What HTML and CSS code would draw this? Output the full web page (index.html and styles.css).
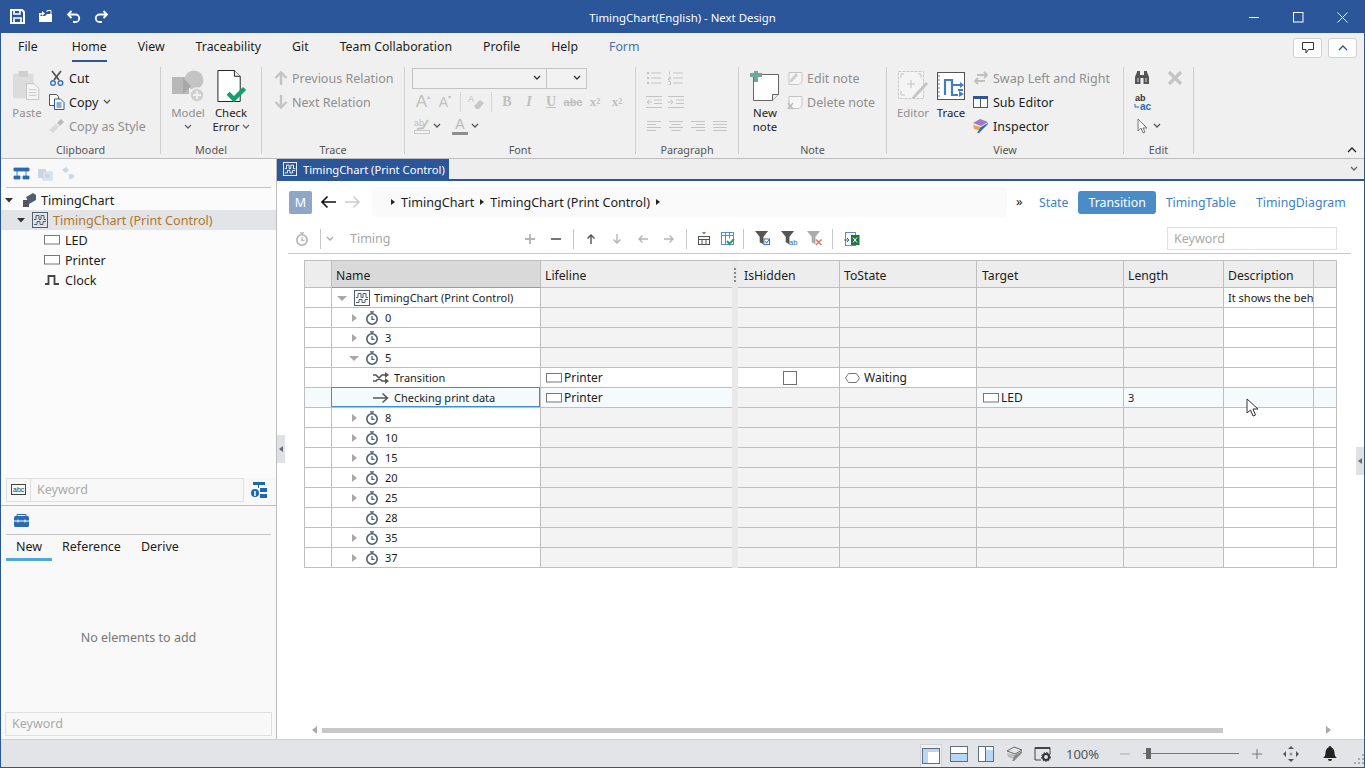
FILE: index.html
```html
<!DOCTYPE html>
<html lang="en">
<head>
<meta charset="utf-8">
<title>TimingChart(English) - Next Design</title>
<link rel="stylesheet" href="styles.css">
</head>
<body>
<svg class="sprite" xmlns="http://www.w3.org/2000/svg">
  <symbol id="chart" viewBox="0 0 16 16"><rect x=".5" y=".5" width="15" height="15" fill="none" stroke="currentColor"/><path d="M2 7.500h2v-4h3v4h2v-4h3v4h2M2 12.500h3v-3h3v3h3v-3h3" fill="none" stroke="currentColor"/></symbol>
  <symbol id="clock" viewBox="0 0 14 14"><circle cx="7" cy="8" r="5.200" fill="none" stroke="#4d5f73" stroke-width="1.600"/><path d="M5 .8h4M7 1v2M7 5v3.300h2.500" fill="none" stroke="#4d5f73" stroke-width="1.300"/></symbol>
  <symbol id="lifeline" viewBox="0 0 16 10"><rect x=".5" y=".5" width="15" height="8.500" fill="#fff" stroke="#777"/></symbol>
  <symbol id="tri-r" viewBox="0 0 10 10"><path d="M3 1l5 4-5 4z" fill="#a8a8a8"/></symbol>
  <symbol id="tri-d" viewBox="0 0 10 10"><path d="M0 3h10L5 8z" fill="#a8a8a8"/></symbol>
  <symbol id="tri-dk" viewBox="0 0 10 10"><path d="M1 3h8L5 7.500z" fill="#333"/></symbol>
  <symbol id="chev" viewBox="0 0 8 6"><path d="M1 1l3 3 3-3" fill="none" stroke="currentColor" stroke-width="1.300"/></symbol>
  <symbol id="arrow-up" viewBox="0 0 16 16"><path d="M8 15V3M2.500 8L8 2.500 13.500 8" fill="none" stroke="currentColor" stroke-width="2.400"/></symbol>
  <symbol id="arrow-dn" viewBox="0 0 16 16"><path d="M8 1v12M2.500 8L8 13.500 13.500 8" fill="none" stroke="currentColor" stroke-width="2.400"/></symbol>
  <symbol id="t-up" viewBox="0 0 12 12"><path d="M6 11V2M2.500 5.500L6 2l3.500 3.500" fill="none" stroke="currentColor" stroke-width="1.400"/></symbol>
  <symbol id="t-dn" viewBox="0 0 12 12"><path d="M6 1v9M2.500 6.500L6 10l3.500-3.500" fill="none" stroke="currentColor" stroke-width="1.400"/></symbol>
  <symbol id="t-lf" viewBox="0 0 12 12"><path d="M11 6H2M5.500 2.500L2 6l3.500 3.500" fill="none" stroke="currentColor" stroke-width="1.400"/></symbol>
  <symbol id="t-rt" viewBox="0 0 12 12"><path d="M1 6h9M6.500 2.500L10 6 6.500 9.500" fill="none" stroke="currentColor" stroke-width="1.400"/></symbol>
  <symbol id="bullets" viewBox="0 0 16 14"><path d="M5 2h10M5 7h10M5 12h10" stroke="#c4c4c4"/><circle cx="2" cy="2" r="1.300" fill="#c4c4c4"/><circle cx="2" cy="7" r="1.300" fill="#c4c4c4"/><circle cx="2" cy="12" r="1.300" fill="#c4c4c4"/></symbol>
  <symbol id="numbers" viewBox="0 0 16 14"><path d="M5 2h10M5 7h10M5 12h10M1.500 .5v3M.5 6h2v1.500h-2V9h2M.5 10.500h2v3h-2" stroke="#c4c4c4" fill="none"/></symbol>
  <symbol id="outdent" viewBox="0 0 16 14"><path d="M0 1.500h16M8 5h8M8 8.500h8M0 12.500h16M6 7H1M3.500 4.500L1 7l2.500 2.500" stroke="#c4c4c4" fill="none"/></symbol>
  <symbol id="indent" viewBox="0 0 16 14"><path d="M0 1.500h16M8 5h8M8 8.500h8M0 12.500h16M0 7h5M2.500 4.500L5 7 2.500 9.500" stroke="#c4c4c4" fill="none"/></symbol>
  <symbol id="al-l" viewBox="0 0 16 12"><path d="M1 1.500h14M1 4.500h9M1 7.500h14M1 10.500h9" stroke="#c4c4c4"/></symbol>
  <symbol id="al-c" viewBox="0 0 16 12"><path d="M1 1.500h14M3.500 4.500h9M1 7.500h14M3.500 10.500h9" stroke="#c4c4c4"/></symbol>
  <symbol id="al-r" viewBox="0 0 16 12"><path d="M1 1.500h14M6 4.500h9M1 7.500h14M6 10.500h9" stroke="#c4c4c4"/></symbol>
  <symbol id="al-j" viewBox="0 0 16 12"><path d="M1 1.500h14M1 4.500h14M1 7.500h14M1 10.500h14" stroke="#c4c4c4"/></symbol>
</svg>

<div class="app">
  <header class="titlebar">
    <div class="qa">
      <svg class="i15" viewBox="0 0 15 15"><path d="M1 1h11l2 2v11H1z" fill="none" stroke="#fff" stroke-width="2"/><path d="M4 1h6v4H4zM4 9h7v5H4z" fill="none" stroke="#fff" stroke-width="1.600"/></svg>
      <svg class="i15" viewBox="0 0 15 15"><path d="M1 4h3V2l3 2.500L4 7V5.500H2.500V7H7l2-2h5v8H1z" fill="#fff"/><path d="M9 3V1.500h4V5" fill="none" stroke="#fff"/></svg>
      <svg class="i15" viewBox="0 0 15 15"><path d="M5.500 2L2 5.500 5.500 9M2 5.500h7.500a3.500 3.500 0 0 1 0 7.500H7" fill="none" stroke="#fff" stroke-width="1.800"/></svg>
      <svg class="i15" viewBox="0 0 15 15"><path d="M9.500 2L13 5.500 9.500 9M13 5.500H5.500a3.500 3.500 0 0 0 0 7.500H8" fill="none" stroke="#fff" stroke-width="1.800"/></svg>
    </div>
    <div class="title">TimingChart(English) - Next Design</div>
    <div class="winbtns">
      <span class="winbtn"><svg class="i11" viewBox="0 0 11 11"><path d="M0 5.500h10" stroke="#fff"/></svg></span>
      <span class="winbtn"><svg class="i11" viewBox="0 0 11 11"><rect x=".5" y=".5" width="9.500" height="9.500" fill="none" stroke="#fff"/></svg></span>
      <span class="winbtn"><svg class="i11" viewBox="0 0 11 11"><path d="M.5.500l10 10M10.500.500l-10 10" stroke="#fff"/></svg></span>
    </div>
  </header>

  <nav class="rtabs">
    <span class="rtab file">File</span>
    <span class="rtab active">Home</span>
    <span class="rtab">View</span>
    <span class="rtab">Traceability</span>
    <span class="rtab">Git</span>
    <span class="rtab">Team Collaboration</span>
    <span class="rtab">Profile</span>
    <span class="rtab">Help</span>
    <span class="rtab form">Form</span>
    <span class="rtab-right">
      <span class="mini"><svg class="i14" viewBox="0 0 14 14"><path d="M1.500 1.500h11v7H7.500L5 12V8.500H1.500z" fill="none" stroke="#333"/></svg></span>
      <span class="mini"><svg class="i10c" viewBox="0 0 10 6"><path d="M1 5l4-4 4 4" fill="none" stroke="#2b579a" stroke-width="1.300"/></svg></span>
    </span>
  </nav>

  <section class="ribbon">
    <div class="group g-clip">
      <div class="gbody">
        <div class="big paste dis">
          <span class="bigicon"><svg class="i30" viewBox="0 0 30 32"><rect x="0" y="3" width="22" height="26" rx="1" fill="#dcdcdc"/><rect x="6" y="0" width="10" height="6" fill="#cfcfcf"/><path d="M14.500 13.500h8l5 5v12h-13z" fill="#f4f4f4" stroke="#c4c4c4"/><path d="M17 20h8M17 23h8M17 26h8" stroke="#c8c8c8"/></svg></span>
          <span class="bl">Paste</span>
        </div>
        <div class="col">
          <div class="item s-cut"><svg class="i16" viewBox="0 0 16 16"><path d="M3 1l7 9M12 1L5 10" stroke="#555" stroke-width="1.800"/><circle cx="4" cy="13" r="2.300" fill="none" stroke="#3b74b8" stroke-width="1.400"/><circle cx="11.500" cy="13" r="2.300" fill="none" stroke="#3b74b8" stroke-width="1.400"/></svg><span>Cut</span></div>
          <div class="item s-copy"><svg class="i16" viewBox="0 0 16 16"><path d="M.5.500h7l2 2v9h-9z" fill="#fff" stroke="#555"/><path d="M5.500 5h6l3.500 3.500v7H5.500z" fill="#fff" stroke="#2b579a"/><path d="M7.500 9h5M7.500 11h5M7.500 13h5" stroke="#2b579a"/></svg><span>Copy</span><svg class="chev"><use href="#chev"/></svg></div>
          <div class="item s-brush dis"><svg class="i16" viewBox="0 0 16 16"><path d="M0 12l7-6 3 3-6 6z" fill="#dadada"/><path d="M8 5l4-4 3 3-4 4z" fill="#bbb"/></svg><span>Copy as Style</span></div>
        </div>
      </div>
      <div class="glabel">Clipboard</div>
    </div>

    <div class="group g-model">
      <div class="gbody">
        <div class="big m-btn dis">
          <span class="bigicon"><svg class="i32" viewBox="0 0 32 32"><rect x="0" y="7" width="17" height="17" fill="#b8b8b8"/><circle cx="22" cy="10" r="9.500" fill="#c4c4c4"/><path d="M11 8l8 8-8 8z" fill="#a8a8a8"/><circle cx="25" cy="25" r="7" fill="#d0d0d0" stroke="#f0f0f0" stroke-width="1.500"/><path d="M25 21v8M21 25h8" stroke="#f0f0f0" stroke-width="1.800"/></svg></span>
          <span class="bl">Model</span>
          <span class="bl"><svg class="chev"><use href="#chev"/></svg></span>
        </div>
        <div class="big m-btn">
          <span class="bigicon"><svg class="i32" viewBox="0 0 32 33"><path d="M2.500.500h17l6 6v26h-23z" fill="#fff" stroke="#222"/><path d="M19.500.500v6h6" fill="#eee" stroke="#222"/><path d="M13 24l6 6 11-11" fill="none" stroke="#12a070" stroke-width="4.500"/></svg></span>
          <span class="bl2">Check<br>Error<svg class="chev chev-in"><use href="#chev"/></svg></span>
        </div>
      </div>
      <div class="glabel">Model</div>
    </div>

    <div class="group g-trace">
      <div class="gbody">
        <div class="col dis">
          <div class="item s-rel"><svg class="i16 ic-dis"><use href="#arrow-up"/></svg><span>Previous Relation</span></div>
          <div class="item s-rel"><svg class="i16 ic-dis"><use href="#arrow-dn"/></svg><span>Next Relation</span></div>
        </div>
      </div>
      <div class="glabel">Trace</div>
    </div>

    <div class="group g-font">
      <div class="gbody fcol">
        <div class="frow combos">
          <span class="combo c1"><svg class="chev"><use href="#chev"/></svg></span><span class="combo c2"><svg class="chev"><use href="#chev"/></svg></span>
        </div>
        <div class="frow fonts">
          <span class="fb sans lg">A<sup class="tiny">▴</sup></span>
          <span class="fb sans md">A<sup class="tiny">▾</sup></span>
          <span class="vsep"></span>
          <span class="fb"><svg class="i16" viewBox="0 0 16 16"><text x="0" y="8" class="svgt">A</text><path d="M6 12l6-6 4 3-5 6H8z" fill="#c8c8c8"/></svg></span>
          <span class="vsep"></span>
          <span class="fb serif b">B</span>
          <span class="fb serif i">I</span>
          <span class="fb serif u">U</span>
          <span class="fb sans st">abc</span>
          <span class="fb serif xs">x<sub>2</sub></span>
          <span class="fb serif xs">x<sup>2</sup></span>
        </div>
        <div class="frow colors">
          <svg class="i16" viewBox="0 0 16 16"><text x="0" y="8" class="svgt">ab</text><path d="M3 11l6-1 5-8" fill="none" stroke="#c4c4c4" stroke-width="2"/><rect x=".5" y="12.500" width="15" height="3" fill="#f4f4f4" stroke="#c8c8c8"/></svg>
          <svg class="chev"><use href="#chev"/></svg>
          <span class="acolor">A</span>
          <svg class="chev"><use href="#chev"/></svg>
        </div>
      </div>
      <div class="glabel">Font</div>
    </div>

    <div class="group g-para">
      <div class="gbody fcol">
        <div class="frow"><span class="pb"><svg class="i15w"><use href="#bullets"/></svg></span><span class="pb"><svg class="i15w"><use href="#numbers"/></svg></span></div>
        <div class="frow"><span class="pb"><svg class="i15w"><use href="#outdent"/></svg></span><span class="pb"><svg class="i15w"><use href="#indent"/></svg></span></div>
        <div class="frow"><span class="pb"><svg class="i15w"><use href="#al-l"/></svg></span><span class="pb"><svg class="i15w"><use href="#al-c"/></svg></span><span class="pb"><svg class="i15w"><use href="#al-r"/></svg></span><span class="pb"><svg class="i15w"><use href="#al-j"/></svg></span></div>
      </div>
      <div class="glabel">Paragraph</div>
    </div>

    <div class="group g-note">
      <div class="gbody">
        <div class="big n-btn">
          <span class="bigicon"><svg class="i30" viewBox="0 0 30 30"><path d="M3.500 3.500h25v20l-6 6h-19z" fill="#fff" stroke="#666"/><path d="M22.500 29.500v-6h6" fill="#eee" stroke="#666"/><path d="M0 4h12M6 0v11" stroke="#6fa89a" stroke-width="4"/></svg></span>
          <span class="bl2">New<br>note</span>
        </div>
        <div class="col dis">
          <div class="item s-note"><svg class="i16" viewBox="0 0 16 16"><path d="M2 2.500h13v9l-3 3H2z" fill="#f6f6f6" stroke="#c4c4c4"/><path d="M3 10l6-7 2 2-6 7H3z" fill="#ccc"/></svg><span>Edit note</span></div>
          <div class="item s-note"><svg class="i16" viewBox="0 0 16 16"><path d="M2 2.500h13v9l-3 3H2z" fill="#f6f6f6" stroke="#c4c4c4"/><path d="M1 9l5 6M6 9l-5 6" stroke="#bbb" stroke-width="1.500"/></svg><span>Delete note</span></div>
        </div>
      </div>
      <div class="glabel">Note</div>
    </div>

    <div class="group g-view">
      <div class="gbody">
        <div class="big v-btn dis">
          <span class="bigicon"><svg class="i30" viewBox="0 0 30 30"><rect x=".5" y=".5" width="25" height="27" fill="#f4f4f4" stroke="#c8c8c8" stroke-dasharray="3 1"/><path d="M6 3H3v4M20 3h3v4M3 20v4h4M13 9v8M9 13h8" fill="none" stroke="#c4c4c4"/><path d="M15 25l13-14 2 2-13 14h-3z" fill="#c4c4c4"/></svg></span>
          <span class="bl">Editor</span>
        </div>
        <div class="big v-btn">
          <span class="bigicon"><svg class="i28" viewBox="0 0 28 28"><rect x=".5" y=".5" width="27" height="27" fill="#fff" stroke="#555"/><path d="M8 23V8h7v15h6M15 13h10M21 18h5" fill="none" stroke="#3f7fc1" stroke-width="2.200"/><path d="M23 10l4 3-4 3zM22 19l5 3-5 3z" fill="#3f7fc1"/><path d="M2 3v23" stroke="#777" stroke-dasharray="2 2"/></svg></span>
          <span class="bl">Trace</span>
        </div>
        <div class="col">
          <div class="item s-view dis"><svg class="i16" viewBox="0 0 16 16"><path d="M4 5h10M11 2l3 3-3 3M12 11H2M5 8l-3 3 3 3" fill="none" stroke="#c0c0c0" stroke-width="1.800"/></svg><span>Swap Left and Right</span></div>
          <div class="item s-view"><svg class="i16" viewBox="0 0 16 16"><rect x=".5" y="2.500" width="14" height="11" fill="#fff" stroke="#555"/><rect x="0" y="2" width="15" height="3" fill="#2b579a"/><path d="M7.500 5v8" stroke="#555"/></svg><span>Sub Editor</span></div>
          <div class="item s-view"><svg class="i16" viewBox="0 0 16 16"><path d="M0 5l7-4 8 3-7 4z" fill="#a178c4"/><path d="M0 7l8 2v4L1 11z" fill="#eda14a"/><path d="M8 9l7-4v1l-9 9H4z" fill="#2b6cb0"/></svg><span>Inspector</span></div>
        </div>
      </div>
      <div class="glabel">View</div>
    </div>

    <div class="group g-edit">
      <div class="gbody fcol">
        <div class="frow"><svg class="i16" viewBox="0 0 16 16"><path d="M1 7l2-5V1h3v4h4V1h3v1l2 5v7H9.500V8h-3v6H1z" fill="#555"/><path d="M3 8h2v4H3zM11 8h2v4h-2z" fill="#999"/></svg><svg class="i16 ex" viewBox="0 0 16 16"><path d="M2 2l12 12M14 2L2 14" stroke="#c4c4c4" stroke-width="3.200"/></svg></div>
        <div class="frow"><svg class="i17" viewBox="0 0 17 17"><text x="1" y="7" class="svgab">ab</text><text x="6" y="16" class="svgac">ac</text><path d="M1 10v3h4" fill="none" stroke="#2b6cb0"/></svg></div>
        <div class="frow"><svg class="i16 cur" viewBox="0 0 12 16"><path d="M1 1v12l3-3 2 5 2-1-2-4h4z" fill="#f8f8f8" stroke="#777"/></svg><svg class="chev"><use href="#chev"/></svg></div>
      </div>
      <div class="glabel">Edit</div>
    </div>
    <svg class="collapse" viewBox="0 0 10 6"><path d="M1 5l4-4 4 4" fill="none" stroke="#222" stroke-width="1.300"/></svg>
  </section>

  <div class="workspace">
    <aside class="left">
      <div class="ltool">
        <svg class="i15" viewBox="0 0 15 15"><path d="M0 2h15v3H0zM0 10h6v3H0zM9 10h6v3H9zM3 5v5M12 5v5" fill="#2b6cb0" stroke="#2b6cb0" stroke-width=".8"/></svg>
        <svg class="i15" viewBox="0 0 15 15"><path d="M0 3h8v9H0z" fill="#c9d6e4"/><path d="M5 6h9v8H5z" fill="#dfe6ee" stroke="#c9d6e4"/><path d="M7 9h5M7 11h5" stroke="#b8c8d8"/></svg>
        <svg class="i15" viewBox="0 0 15 15"><path d="M0 4l4-3 3 3-3 3zM7 8h3l3 2-3 3H7z" fill="#ccd8e4"/></svg>
      </div>
      <div class="tree">
        <div class="tn t0"><svg class="tog"><use href="#tri-dk"/></svg><svg class="i16" viewBox="0 0 16 16"><path d="M5 5l7-4 3 2v5l-7 4z" fill="#4d5f73"/><rect x="2" y="8" width="6" height="7" fill="#556"/></svg><span>TimingChart</span></div>
        <div class="tn t1 sel"><svg class="tog"><use href="#tri-dk"/></svg><svg class="i16 chart-ic"><use href="#chart"/></svg><span>TimingChart (Print Control)</span></div>
        <div class="tn t2"><svg class="ll"><use href="#lifeline"/></svg><span>LED</span></div>
        <div class="tn t2"><svg class="ll"><use href="#lifeline"/></svg><span>Printer</span></div>
        <div class="tn t2"><svg class="ll" viewBox="0 0 16 10"><path d="M1 9h3.500V1h6v8H15" fill="none" stroke="#444" stroke-width="1.800"/></svg><span>Clock</span></div>
      </div>
      <div class="lsearch">
        <div class="sbox"><span class="sbtn"><svg class="i16" viewBox="0 0 16 14"><rect x=".5" y="1.500" width="14" height="10" fill="none" stroke="#444"/><text x="2" y="9" class="svgabc">abc</text></svg></span><span class="ph">Keyword</span></div>
        <svg class="i16 lsicon" viewBox="0 0 16 16"><path d="M2 0h12v3H2zM7 3h1v3H7z" fill="#1f66b0"/><circle cx="4" cy="11" r="4" fill="#1f66b0"/><path d="M4 9v5" stroke="#fff" stroke-width="1.500"/><path d="M9 6h7v4H9zM9 12h7v4H9z" fill="#1f66b0"/></svg>
      </div>
      <div class="ltool low">
        <svg class="i15" viewBox="0 0 15 14"><path d="M3 3V1h9v2" fill="none" stroke="#2b6cb0"/><rect x="0" y="2.500" width="15" height="11" rx="1.500" fill="#2b6cb0"/><path d="M0 7.500h15M4 6v3M11 6v3" stroke="#fff"/></svg>
      </div>
      <div class="ltabs"><span class="lt on">New</span><span class="lt">Reference</span><span class="lt">Derive</span></div>
      <div class="lempty">No elements to add</div>
      <div class="lkey">Keyword</div>
    </aside>

    <main class="main">
      <div class="doctabs">
        <div class="doctab"><svg class="i14 tabic"><use href="#chart"/></svg><span>TimingChart (Print Control)</span></div>
        <svg class="doc-chev"><use href="#chev"/></svg>
      </div>

      <div class="crumbrow">
        <span class="mbtn">M</span>
        <svg class="navarrow" viewBox="0 0 16 14"><path d="M16 7H2M7.500 1.500L2 7l5.500 5.500" fill="none" stroke="#111" stroke-width="1.600"/></svg>
        <svg class="navarrow fwd" viewBox="0 0 16 14"><path d="M0 7h14M8.500 1.500L14 7l-5.500 5.500" fill="none" stroke="#ccc" stroke-width="1.600"/></svg>
        <div class="crumbs"><i class="ct"></i><span>TimingChart</span><i class="ct"></i><span>TimingChart (Print Control)</span><i class="ct"></i></div>
        <span class="more">»</span>
        <span class="vtab">State</span><span class="vtab on">Transition</span><span class="vtab">TimingTable</span><span class="vtab">TimingDiagram</span>
      </div>

      <div class="tbar">
        <svg class="i14 tb-clock" viewBox="0 0 14 14"><circle cx="7" cy="8" r="5.200" fill="none" stroke="#b4b4b4" stroke-width="1.600"/><path d="M5 .8h4M7 1v2M7 5v3.300h2.500" fill="none" stroke="#b4b4b4" stroke-width="1.300"/></svg>
        <span class="tsep first"></span>
        <svg class="chev tb-chev"><use href="#chev"/></svg>
        <span class="tb-ph">Timing</span>
        <span class="tb-ops">
          <svg class="i12" viewBox="0 0 12 12"><path d="M6 1v10M1 6h10" stroke="#b4b4b4" stroke-width="1.800"/></svg>
          <svg class="i12 op" viewBox="0 0 12 12"><path d="M1 6h10" stroke="#666" stroke-width="1.800"/></svg>
          <span class="tsep s2"></span>
          <svg class="i12 op-a up"><use href="#t-up"/></svg>
          <svg class="i12 op-a"><use href="#t-dn"/></svg>
          <svg class="i12 op-a"><use href="#t-lf"/></svg>
          <svg class="i12 op-a"><use href="#t-rt"/></svg>
          <span class="tsep s3"></span>
          <svg class="i14 op-t" viewBox="0 0 14 14"><path d="M5 0h4L7 2.500z" fill="#3f9a4a"/><rect x="1.500" y="4.500" width="11" height="8" fill="#fff" stroke="#555"/><path d="M1.500 7.500h11M5 7.500v5M9 7.500v5" stroke="#555"/></svg>
          <svg class="i14 op-t" viewBox="0 0 14 14"><rect x=".5" y=".5" width="12" height="12" fill="#fff" stroke="#5b8fc4"/><path d="M.5 3.500h12M4.500 .5v12M8.500 .5v6" stroke="#5b8fc4"/><path d="M6 9l2.500 3L13 7" fill="none" stroke="#2aa36a" stroke-width="2"/></svg>
          <span class="tsep s4"></span>
          <svg class="op-f" viewBox="0 0 16 16"><path d="M0 0h14L9 6v8l-4-2V6z" fill="#555"/><rect x="9.500" y="8.500" width="6" height="6" fill="#fff" stroke="#2b6cb0"/><path d="M11 11l1.500 2 2.500-4" fill="none" stroke="#2b6cb0"/></svg>
          <svg class="op-f" viewBox="0 0 16 16"><path d="M0 0h14L9 6v8l-4-2V6z" fill="#555"/><text x="8.500" y="15" class="svgab blue">ab</text></svg>
          <svg class="op-f" viewBox="0 0 16 16"><path d="M0 0h14L9 6v8l-4-2V6z" fill="#aaa"/><path d="M9.500 9l6 6M15.500 9l-6 6" stroke="#e0705a" stroke-width="1.500"/></svg>
          <span class="tsep s5"></span>
          <svg class="i16 op-x" viewBox="0 0 16 16"><rect x="1.500" y="1.500" width="10" height="13" fill="#fff" stroke="#5b8fc4"/><rect x="7" y="4" width="8.500" height="10" fill="#217346"/><path d="M9 6.500l4 5M13 6.500l-4 5" stroke="#fff"/><path d="M0 9h5M3 7l2 2-2 2" fill="none" stroke="#2b6cb0"/></svg>
        </span>
        <span class="tb-key">Keyword</span>
      </div>

      <div class="gridwrap">
        <table class="grid">
          <colgroup><col class="c-h"><col class="c-n"><col class="c-l"><col class="c-s"><col class="c-i"><col class="c-t"><col class="c-g"><col class="c-len"><col class="c-d"><col class="c-x"></colgroup>
          <thead><tr><th></th><th class="nameh">Name</th><th>Lifeline</th><th class="split"><i class="dots"></i></th><th class="ish">IsHidden</th><th>ToState</th><th class="tgt">Target</th><th>Length</th><th>Description</th><th></th></tr></thead>
          <tbody>
            <tr><td class="w"></td><td class="w"><span class="nm lv0"><svg class="exp"><use href="#tri-d"/></svg><svg class="i16 chart-g"><use href="#chart"/></svg>TimingChart (Print Control)</span></td><td></td><td class="split"></td><td></td><td></td><td></td><td></td><td class="w desc">It shows the behavior</td><td class="w"></td></tr>
            <tr><td class="w"></td><td class="w"><span class="nm lv1"><svg class="exp"><use href="#tri-r"/></svg><svg class="clk"><use href="#clock"/></svg>0</span></td><td></td><td class="split"></td><td></td><td></td><td></td><td></td><td class="w"></td><td class="w"></td></tr>
            <tr><td class="w"></td><td class="w"><span class="nm lv1"><svg class="exp"><use href="#tri-r"/></svg><svg class="clk"><use href="#clock"/></svg>3</span></td><td></td><td class="split"></td><td></td><td></td><td></td><td></td><td class="w"></td><td class="w"></td></tr>
            <tr><td class="w"></td><td class="w"><span class="nm lv1"><svg class="exp"><use href="#tri-d"/></svg><svg class="clk"><use href="#clock"/></svg>5</span></td><td></td><td class="split"></td><td></td><td></td><td></td><td></td><td class="w"></td><td class="w"></td></tr>
            <tr><td class="w"></td><td class="w"><span class="nm lv2"><svg class="i16 l2ic" viewBox="0 0 16 12"><path d="M0 3h3l6 6h4M0 9h3l6-6h4" fill="none" stroke="#555" stroke-width="1.600"/><path d="M12 0l4 3-4 3zM12 6l4 3-4 3z" fill="#555"/></svg>Transition</span></td><td class="w big-t"><span class="ref"><svg class="ll"><use href="#lifeline"/></svg>Printer</span></td><td class="split"></td><td class="w cb"><i class="check"></i></td><td class="w big-t"><span class="ref"><svg class="hex" viewBox="0 0 15 10"><path d="M3.500.500h8l3 4.500-3 4.500h-8L.5 5z" fill="#fff" stroke="#777"/></svg>Waiting</span></td><td></td><td></td><td class="w"></td><td class="w"></td></tr>
            <tr class="selrow"><td class="b"></td><td class="b focus"><span class="nm lv2"><svg class="i16 l2ic" viewBox="0 0 16 12"><path d="M0 6h14M9.500 1.500L14.500 6l-5 4.500" fill="none" stroke="#555" stroke-width="1.500"/></svg>Checking print data</span></td><td class="b big-t"><span class="ref"><svg class="ll"><use href="#lifeline"/></svg>Printer</span></td><td class="split"></td><td></td><td></td><td class="b big-t"><span class="ref tgt-ref"><svg class="ll"><use href="#lifeline"/></svg>LED</span></td><td class="b">3</td><td class="b"></td><td class="b"></td></tr>
            <tr><td class="w"></td><td class="w"><span class="nm lv1"><svg class="exp"><use href="#tri-r"/></svg><svg class="clk"><use href="#clock"/></svg>8</span></td><td></td><td class="split"></td><td></td><td></td><td></td><td></td><td class="w"></td><td class="w"></td></tr>
            <tr><td class="w"></td><td class="w"><span class="nm lv1"><svg class="exp"><use href="#tri-r"/></svg><svg class="clk"><use href="#clock"/></svg>10</span></td><td></td><td class="split"></td><td></td><td></td><td></td><td></td><td class="w"></td><td class="w"></td></tr>
            <tr><td class="w"></td><td class="w"><span class="nm lv1"><svg class="exp"><use href="#tri-r"/></svg><svg class="clk"><use href="#clock"/></svg>15</span></td><td></td><td class="split"></td><td></td><td></td><td></td><td></td><td class="w"></td><td class="w"></td></tr>
            <tr><td class="w"></td><td class="w"><span class="nm lv1"><svg class="exp"><use href="#tri-r"/></svg><svg class="clk"><use href="#clock"/></svg>20</span></td><td></td><td class="split"></td><td></td><td></td><td></td><td></td><td class="w"></td><td class="w"></td></tr>
            <tr><td class="w"></td><td class="w"><span class="nm lv1"><svg class="exp"><use href="#tri-r"/></svg><svg class="clk"><use href="#clock"/></svg>25</span></td><td></td><td class="split"></td><td></td><td></td><td></td><td></td><td class="w"></td><td class="w"></td></tr>
            <tr><td class="w"></td><td class="w"><span class="nm lv1"><span class="exp"></span><svg class="clk"><use href="#clock"/></svg>28</span></td><td></td><td class="split"></td><td></td><td></td><td></td><td></td><td class="w"></td><td class="w"></td></tr>
            <tr><td class="w"></td><td class="w"><span class="nm lv1"><svg class="exp"><use href="#tri-r"/></svg><svg class="clk"><use href="#clock"/></svg>35</span></td><td></td><td class="split"></td><td></td><td></td><td></td><td></td><td class="w"></td><td class="w"></td></tr>
            <tr><td class="w"></td><td class="w"><span class="nm lv1"><svg class="exp"><use href="#tri-r"/></svg><svg class="clk"><use href="#clock"/></svg>37</span></td><td></td><td class="split"></td><td></td><td></td><td></td><td></td><td class="w"></td><td class="w"></td></tr>
          </tbody>
        </table>
        <svg class="pointer" viewBox="0 0 13 19"><path d="M1 1v14l3.500-3 2.500 6 2.500-1-2.500-6h5z" fill="#fff" stroke="#333"/></svg>
      </div>

      <div class="hscroll">
        <i class="sa l"></i><span class="thumb"></span><i class="sa r"></i>
      </div>
    </main>

    <span class="grip gl"><i></i></span>
    <span class="grip gr"><i></i></span>
  </div>

  <footer class="status">
    <span class="sb on"><svg class="i18" viewBox="0 0 18 16"><rect x=".5" y=".5" width="17" height="15" fill="#fff" stroke="#5f6f80"/><rect x="1" y="1" width="16" height="3" fill="#b9d6f2"/><rect x="1" y="4" width="5" height="11" fill="#b9d6f2"/></svg></span>
    <span class="sb"><svg class="i18" viewBox="0 0 18 16"><rect x=".5" y=".5" width="17" height="15" fill="#fff" stroke="#5f6f80"/><rect x="1" y="8" width="16" height="7" fill="#b9d6f2"/><path d="M1 7.500h16" stroke="#5f6f80"/></svg></span>
    <span class="sb"><svg class="i18" viewBox="0 0 18 16"><rect x=".5" y=".5" width="15" height="15" fill="#fff" stroke="#5f6f80"/><rect x="8" y="4" width="7" height="11" fill="#b9d6f2"/><path d="M7.500 1v14" stroke="#5f6f80"/></svg></span>
    <span class="sb"><svg class="i18" viewBox="0 0 16 16"><path d="M0 5l7-4 8 3-7 4z" fill="none" stroke="#666"/><path d="M0 7l8 2v4L1 11z" fill="#bbb"/><path d="M8 9l7-4v2l-8 8H5z" fill="#888"/></svg></span>
    <span class="sb"><svg class="i18" viewBox="0 0 18 16"><path d="M1 9V1.500h15V8M1 9v5h6" fill="none" stroke="#444"/><path d="M1 1h15v2H1z" fill="#444"/><circle cx="12" cy="11" r="3" fill="none" stroke="#333" stroke-width="2"/><circle cx="12" cy="11" r="4.500" fill="none" stroke="#333" stroke-dasharray="1.500 1.500"/></svg></span>
    <span class="zoomv">100%</span>
    <svg class="i10 zm" viewBox="0 0 10 10"><path d="M0 5h10" stroke="#aaa"/></svg>
    <span class="slider"><i></i></span>
    <svg class="i12 zp" viewBox="0 0 12 12"><path d="M6 1v10M1 6h10" stroke="#777"/></svg>
    <svg class="i16 mv" viewBox="0 0 16 16"><path d="M8 0l3 3H5zM8 16l-3-3h6zM0 8l3-3v6zM16 8l-3 3V5z" fill="#555"/><circle cx="8" cy="8" r="1.500" fill="#999"/></svg>
    <svg class="i16 bell" viewBox="0 0 16 16"><path d="M8 0a1.500 1.500 0 0 1 1.500 1.500C12 2.500 12.500 5 12.500 7c0 2.500 1 4 2.500 5H1c1.500-1 2.500-2.500 2.500-5 0-2 .5-4.500 3-5.500A1.500 1.500 0 0 1 8 0z" fill="#222"/><path d="M6 13h4a2 2 0 0 1-4 0z" fill="#222"/></svg>
    <svg class="i12 sgrip" viewBox="0 0 12 12"><path d="M10 1h2v2h-2zM6 5h2v2H6zM10 5h2v2h-2zM2 9h2v2H2zM6 9h2v2H6zM10 9h2v2h-2z" fill="#aaa"/></svg>
  </footer>
</div>
</body>
</html>
```

FILE: styles.css
```css
* { box-sizing: border-box; }
html, body { margin: 0; padding: 0; height: 100%; overflow: hidden; }
body { font-family: "Noto Sans", "Open Sans", sans-serif; font-size: 12.5px; color: #1c1c1c; background: #f0f0f0; }
.sprite { position: absolute; width: 0; height: 0; }
svg { display: block; flex: none; overflow: visible; }
.app { width: 1365px; height: 768px; border: 1px solid #2b579a; display: flex; flex-direction: column; position: relative; background: #f0f0f0; }

.i10 { width: 10px; height: 10px; } .i10c { width: 10px; height: 6px; } .i11 { width: 11px; height: 11px; } .i12 { width: 12px; height: 12px; }
.i14 { width: 14px; height: 14px; } .i15 { width: 15px; height: 15px; } .i16 { width: 16px; height: 16px; }
.i17 { width: 17px; height: 17px; } .i18 { width: 18px; height: 16px; } .i28 { width: 28px; height: 28px; }
.i30 { width: 30px; height: 30px; } .i32 { width: 32px; height: 32px; }
.i15w { width: 16px; height: 14px; }
.chev { width: 8px; height: 6px; color: #555; }
.dis { color: #8f8f8f; }

/* title bar */
.titlebar { height: 32px; background: #2b579a; color: #fff; display: grid; grid-template-columns: 1fr auto 1fr; align-items: center; flex: none; }
.qa { display: flex; gap: 13px; padding-left: 9px; padding-bottom: 1px; }
.title { font-size: 11.4px; }
.winbtns { display: flex; justify-content: flex-end; }
.winbtn { width: 44px; height: 32px; display: flex; align-items: center; justify-content: center; }

/* ribbon tabs */
.rtabs { height: 29px; display: flex; gap: 31px; padding-left: 17px; flex: none; font-size: 12.3px; }
.rtab { height: 29px; line-height: 27px; border-bottom: 2px solid transparent; }
.rtab.file { margin-right: 3px; }
.rtab.active { border-bottom-color: #2b579a; }
.rtab.form { color: #4c6ea5; }
.rtab-right { margin-left: auto; display: flex; gap: 6px; padding: 5px 7px 0 0; }
.mini { width: 29px; height: 20px; background: #fff; border: 1px solid #d0d0d0; border-radius: 3px; display: flex; align-items: center; justify-content: center; }

/* ribbon */
.ribbon { height: 97px; display: flex; padding-top: 5px; border-bottom: 1px solid #bdbdbd; position: relative; flex: none; }
.group { height: 87px; border-right: 1px solid #cfcfcf; display: flex; flex-direction: column; flex: none; }
.gbody { height: 72px; margin-top: -1px; display: flex; flex: none; }
.glabel { text-align: center; font-size: 10.8px; line-height: 14px; height: 14px; color: #555; margin-top: 5px; flex: none; }
.g-clip { width: 160px; } .g-model { width: 101px; } .g-trace { width: 143px; } .g-font { width: 231px; }
.g-para { width: 103px; } .g-note { width: 148px; } .g-view { width: 237px; } .g-edit { width: 70px; }
.big { display: flex; flex-direction: column; align-items: center; font-size: 11.4px; }
.bigicon { height: 40px; padding-bottom: 1px; display: flex; align-items: center; justify-content: center; }
.bl { height: 14px; line-height: 14px; display: flex; align-items: center; justify-content: center; gap: 2px; white-space: nowrap; }
.bl .chev { color: #666; }
.bl2 { line-height: 14px; text-align: center; white-space: nowrap; }
.chev-in { display: inline-block; margin-left: 2px; vertical-align: 1px; color: #666; }
.col { display: flex; flex-direction: column; }
.item { height: 24px; display: flex; align-items: center; gap: 4px; white-space: nowrap; }
.frow { height: 24px; display: flex; align-items: center; flex: none; }
.fcol { flex-direction: column; }
.g-clip .gbody { padding-left: 10px; }
.paste { width: 32px; }
.g-clip .col { margin-left: 6px; }
.g-clip .item .chev { margin-left: 1px; }
.g-model .gbody { padding-left: 9px; gap: 7px; }
.m-btn { width: 36px; }
.g-trace .gbody { padding-left: 11px; }
.s-rel { gap: 3px; }
.ic-dis { color: #c4c4c4; }
.g-font .gbody { padding-left: 7px; }
.combo { height: 21px; border: 1px solid #c4c4c4; background: #f2f2f2; display: flex; align-items: center; justify-content: flex-end; padding-right: 5px; }
.c1 { width: 135px; } .c2 { width: 40px; border-left: 0; }
.combo .chev { color: #333; }
.fb { width: 22px; height: 20px; display: flex; align-items: center; justify-content: center; color: #c0c0c0; font-size: 12px; }
.fonts .fb.lg { font-size: 17px; }
.fonts .fb.md { font-size: 14px; }
.tiny { font-size: 6px; line-height: 1; align-self: flex-start; margin-top: 2px; }
.sans { font-family: "Liberation Sans", sans-serif; }
.serif { font-family: "Liberation Serif", serif; font-size: 14px; font-weight: 700; }
.fb.i { font-style: italic; }
.fb.u { text-decoration: underline; }
.fb.st { text-decoration: line-through; font-size: 11px; font-weight: 700; }
.fb.xs { font-size: 13px; }
.fb.xs sub, .fb.xs sup { font-size: 8px; line-height: 0; }
.vsep { width: 1px; height: 20px; background: #d8d8d8; margin: 0 4px; }
.svgt { font-family: "Liberation Sans", sans-serif; font-size: 9px; fill: #c0c0c0; }
.colors { padding-left: 2px; gap: 3px; }
.acolor { width: 16px; margin-left: 8px; text-align: center; color: #bbb; font-size: 14px; line-height: 15px; border-bottom: 3px solid #8f8f8f; font-family: "Liberation Sans", sans-serif; }
.g-para .gbody { padding-left: 7px; }
.pb { width: 22px; display: flex; justify-content: center; }
.g-note .gbody { padding-left: 10px; }
.n-btn { width: 32px; }
.g-note .col { margin-left: 5px; }
.s-note { gap: 4px; margin-left: 1px; }
.g-view .gbody { padding-left: 9px; gap: 4px; }
.v-btn { width: 34px; }
.g-view .col { margin-left: 1px; }
.g-edit .gbody { padding-left: 10px; }
.ex { margin-left: 17px; }
.cur { width: 12px; margin-left: 3px; margin-right: 4px; }
.svgab { font-family: "Liberation Sans", sans-serif; font-size: 9px; font-weight: 700; fill: #333; }
.svgac { font-family: "Liberation Sans", sans-serif; font-size: 10px; font-weight: 700; fill: #2b6cb0; }
.svgab.blue { fill: #2b6cb0; font-weight: 400; font-size: 8px; }
.svgabc { font-family: "Liberation Sans", sans-serif; font-size: 7px; fill: #333; }
.collapse { position: absolute; right: 7px; bottom: 5px; width: 10px; height: 6px; }

/* workspace */
.workspace { height: 580px; display: flex; position: relative; flex: none; }
.left { width: 276px; flex: none; border-right: 1px solid #bdbdbd; background: #f8f8f8; display: flex; flex-direction: column; }
.ltool { height: 29px; margin: 0 5px; padding-left: 8px; border-bottom: 1px solid #c4c4c4; display: flex; align-items: center; gap: 9px; flex: none; }
.tree { flex: 1; padding-top: 2px; background: #fbfbfb; font-size: 12.6px; }
.tn { height: 20px; display: flex; align-items: center; gap: 5px; }
.tog { width: 10px; height: 10px; }
.t0 { padding-left: 3px; gap: 0; }
.t0 .i16 { margin: 0 4px 0 7px; }
.t1 { padding-left: 15px; }
.t1 .tog + .i16 { margin-left: 1px; }
.t2 { padding-left: 43px; }
.sel { background: #e2e4e7; color: #b27727; }
.chart-ic { color: #4d5f73; }
.ll { width: 16px; height: 10px; }
.lsearch { height: 28px; display: flex; align-items: center; padding: 0 9px 4px 5px; border-bottom: 1px solid #bdbdbd; flex: none; }
.sbox { width: 239px; height: 24px; border: 1px solid #e0e0e0; display: flex; align-items: center; }
.sbtn { width: 24px; height: 22px; border-right: 1px solid #e0e0e0; display: flex; align-items: center; justify-content: center; }
.ph { color: #aaa; padding-left: 6px; }
.lsicon { margin-left: 7px; }
.ltabs { height: 26px; margin-left: 5px; display: flex; flex: none; }
.lt { padding: 0 10px; line-height: 23px; border-bottom: 3px solid transparent; }
.lt.on { border-bottom-color: #4fa8d8; width: 46px; }
.lempty { height: 151px; flex: none; padding-top: 1px; display: flex; align-items: center; justify-content: center; color: #777; background: #f9f9f9; }
.lkey { height: 24px; margin: 0 4px 3px; border: 1px solid #e0e0e0; color: #aaa; line-height: 22px; padding-left: 6px; flex: none; }

/* main */
.main { flex: 1; min-width: 0; display: flex; flex-direction: column; background: #fff; }
.doctabs { height: 22px; background: #eee; border-bottom: 2px solid #2b579a; display: flex; justify-content: space-between; align-items: center; flex: none; }
.doctab { width: 172px; height: 20px; background: #2b579a; color: #fff; display: flex; align-items: center; gap: 6px; padding-left: 6px; white-space: nowrap; font-size: 11.2px; }
.tabic { color: #fff; }
.doc-chev { width: 8px; height: 6px; color: #666; margin-right: 6px; }
.crumbrow { height: 44px; display: flex; align-items: center; padding: 0 0 2px 12px; flex: none; }
.mbtn { width: 23px; height: 23px; background: #8fa6c8; color: #fff; border-radius: 2px; display: flex; align-items: center; justify-content: center; flex: none; }
.navarrow { width: 16px; height: 14px; margin-left: 8px; }
.navarrow.fwd { margin-left: 9px; }
.crumbs { width: 635px; height: 30px; flex: none; margin-left: 11px; background: #fafafa; border-radius: 4px; display: flex; align-items: center; padding-left: 19px; gap: 6px; font-size: 12.6px; }
.ct { width: 0; height: 0; border-left: 4px solid #222; border-top: 3px solid transparent; border-bottom: 3px solid transparent; }
.more { margin-left: 9px; width: 13px; font-size: 13px; margin-top: -2px; flex: none; }
.vtab { color: #3d7fc4; padding: 0 10px; height: 23px; line-height: 23px; white-space: nowrap; flex: none; font-size: 12.3px; }
.vtab.on { background: #4a8cc7; color: #fff; border-radius: 3px; }
.tbar { height: 29px; margin: 0 13px 0 11px; border-bottom: 1px solid #c8c8c8; display: flex; align-items: center; flex: none; padding-bottom: 1px; position: relative; }
.tb-clock { margin-left: 7px; }
.tsep { width: 1px; height: 20px; background: #c8c8c8; flex: none; }
.tsep.first { margin-left: 11px; }
.tb-chev { margin-left: 5px; color: #aaa; }
.tb-ph { color: #a8a8a8; margin-left: 16px; width: 40px; flex: none; }
.tb-ops { margin-left: 134px; display: flex; align-items: center; }
.op { margin-left: 14px; }
.s2 { margin-left: 11px; }
.op-a { margin-left: 14px; color: #b4b4b4; }
.op-a.up { margin-left: 11px; color: #555; }
.s3 { margin-left: 11px; }
.op-t { margin-left: 10px; }
.s4 { margin-left: 8px; }
.op-f { margin-left: 11px; width: 15px; height: 15px; }
.s5 { margin-left: 10px; }
.op-x { margin-left: 11px; }
.tb-key { position: absolute; right: 14px; top: 2px; width: 170px; height: 23px; border: 1px solid #e0e0e0; color: #aaa; line-height: 21px; padding-left: 6px; }

.gridwrap { flex: 1; padding: 6px 0 0 27px; position: relative; }
.grid { table-layout: fixed; width: 1033px; border-collapse: separate; border-spacing: 0; border-top: 1px solid #bfbfbf; border-left: 1px solid #bfbfbf; }
.c-h { width: 27px; } .c-n { width: 209px; } .c-l { width: 191px; } .c-s { width: 6px; } .c-i { width: 102px; }
.c-t { width: 137px; } .c-g { width: 147px; } .c-len { width: 100px; } .c-d { width: 90px; } .c-x { width: 23px; }
.grid th { height: 27px; background: #ededed; font-weight: 400; font-size: 12.2px; text-align: left; padding: 3px 0 0 4px; border-right: 1px solid #bfbfbf; border-bottom: 1px solid #bfbfbf; }
.grid th.nameh { background: #d9d9d9; border-bottom-color: #6ea6cf; }
.grid th.ish { padding-left: 6px; }
.grid th.tgt { padding-left: 5px; }
.grid td { height: 20px; padding: 0 0 0 4px; background: #f3f3f3; border-right: 1px solid #bfbfbf; border-bottom: 1px solid #bfbfbf; font-size: 11px; white-space: nowrap; overflow: hidden; }
.grid th:nth-child(3), .grid td:nth-child(3) { border-right: 0; }
.grid td.w { background: #fff; }
.grid td.b { background: #f5fafd; }
.grid td.big-t { font-size: 12px; padding-left: 5px; }
.grid .split, .grid th.split { background: #e9e9e9; border: 0; padding: 0; position: relative; }
.dots { position: absolute; left: 2px; top: 7px; width: 2px; height: 14px; background-image: linear-gradient(#888 50%, transparent 50%); background-size: 2px 4px; }
.nm { display: flex; align-items: center; }
.lv0 { padding-left: 1px; }
.lv1 { padding-left: 13px; }
.lv2 { padding-left: 37px; }
.exp { width: 10px; height: 10px; display: block; flex: none; }
.lv1 .exp { margin-right: 6px; }
.lv0 .exp { margin-right: 7px; }
.chart-g { color: #4d5f73; margin-right: 4px; }
.clk { width: 14px; height: 14px; margin-right: 6px; }
.l2ic { height: 12px; margin-right: 5px; }
.ref { display: flex; align-items: center; gap: 2px; }
.tgt-ref { padding-left: 1px; }
.hex { width: 15px; height: 10px; margin-right: 2px; }
.check { display: block; width: 14px; height: 14px; border: 1px solid #707070; background: #fff; margin-left: 41px; }
.grid td.focus { overflow: visible; position: relative; }
.focus::after { content: ""; position: absolute; left: -1px; top: -1px; right: 0; bottom: 0; border: 1px solid #3d8fd1; pointer-events: none; }
.pointer { position: absolute; left: 969px; top: 144px; width: 13px; height: 19px; }
.hscroll { height: 18px; display: flex; align-items: center; flex: none; padding-left: 35px; }
.thumb { width: 901px; height: 5px; background: #c8c8c8; margin-left: 5px; }
.sa { width: 0; height: 0; border-top: 4px solid transparent; border-bottom: 4px solid transparent; }
.sa.l { border-right: 5px solid #aaa; }
.sa.r { border-left: 5px solid #aaa; margin-left: 103px; }
.grip { position: absolute; width: 8px; height: 28px; background: #dfe1e4; display: flex; align-items: center; justify-content: center; }
.grip i { width: 0; height: 0; border-top: 3px solid transparent; border-bottom: 3px solid transparent; border-right: 4px solid #667; }
.gl { left: 276px; top: 276px; }
.gr { right: 0; top: 288px; }

/* status */
.status { height: 28px; background: #e2e4e7; border-top: 1px solid #cfcfcf; display: flex; align-items: center; padding-left: 919px; flex: none; }
.sb { width: 22px; height: 23px; display: flex; align-items: center; justify-content: center; margin-right: 6px; flex: none; }
.sb.on { background: #eef0f2; border: 1px solid #cfd2d6; border-bottom: 0; align-self: flex-end; }
.zoomv { margin-left: 6px; color: #555; width: 39px; font-size: 13px; }
.zm { margin-left: 16px; }
.slider { width: 100px; height: 1px; background: #777; margin-left: 13px; position: relative; }
.slider i { position: absolute; left: 3px; top: -5px; width: 5px; height: 11px; background: #666; }
.zp { margin-left: 12px; }
.mv { margin-left: 20px; }
.bell { margin-left: 23px; }
.sgrip { margin-left: 14px; margin-top: 10px; }
```
